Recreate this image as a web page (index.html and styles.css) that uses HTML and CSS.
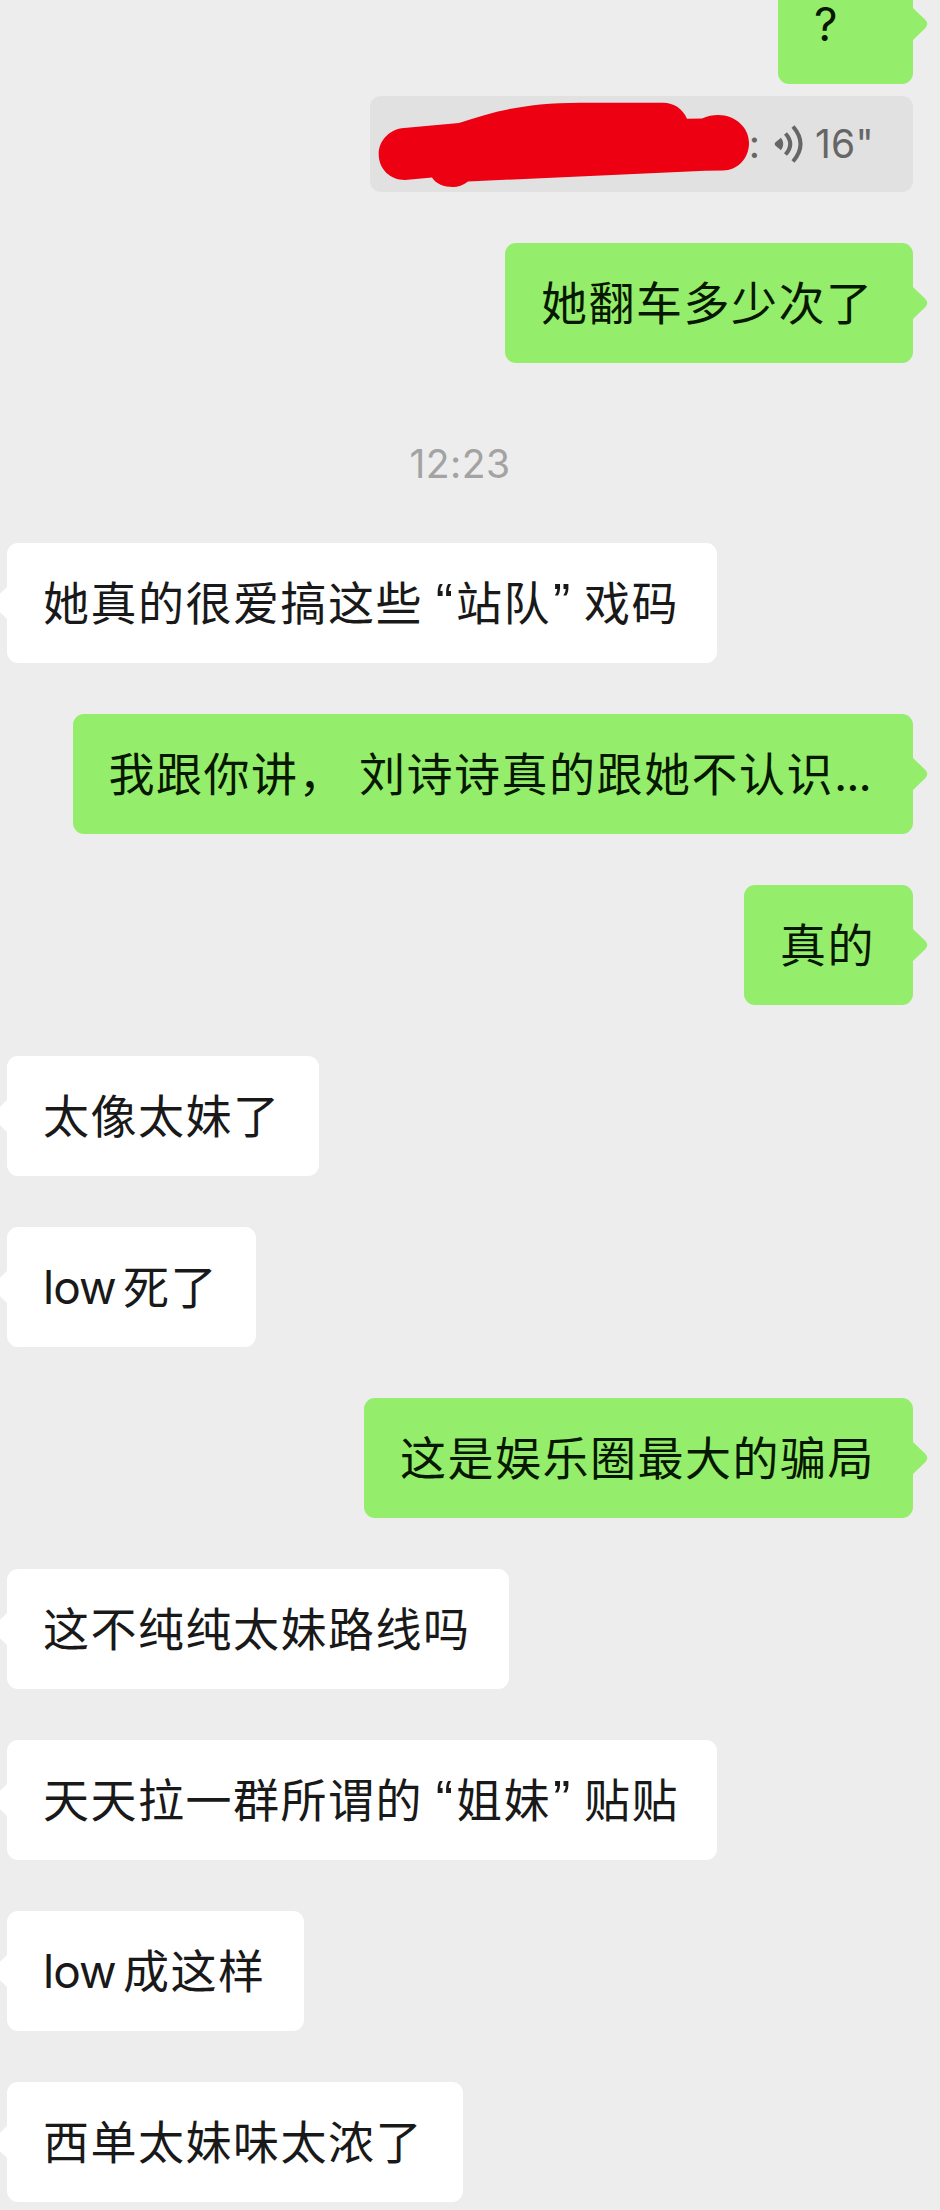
FILE: index.html
```html
<!DOCTYPE html>
<html lang="zh-CN">
<head>
<meta charset="utf-8">
<title>聊天</title>
<link rel="stylesheet" href="styles.css">
</head>
<body>
<svg class="defs" width="0" height="0">
  <symbol id="tail" viewBox="0 0 16 40"><path d="M0 0V1.500Q.5 4 3 6L13 15.500Q17.500 20 13 24.500L3 34Q.5 36 0 38.500V40Z"/></symbol>
</svg>
<main class="chat">
  <div class="row sent first"><div class="bubble short"><span class="latin">?</span><svg class="tail"><use href="#tail"/></svg></div></div>
  <div class="quote">
    <svg class="redaction" viewBox="0 0 543 96">
      <path d="M34 32 L89 27 C125 15 155 7 210 6.700 L293 6.700 C304 6.700 313 13 317 22.700 L332 22.500 C337 20 343 19 348 19 C366 19 379 32 379 47 C379 63 367 74.500 353 74.500 L335 74.700 L98 85.500 C93 89.500 88 91 83 91 C74 91 66 88 62 81.500 L35 84 C20 84 8.700 73 8.700 58 C8.700 44 20 33 34 32Z"/>
    </svg>
    <span class="colon">:</span>
    <svg class="voice" viewBox="0 0 30 40"><path class="wedge" d="M1.500 18.300L7 13.800Q11.500 20 7 26.200L1.500 21.700Q-.2 20 1.500 18.300Z"/><path d="M11.500 9.500Q21 20 11.500 30.500M19 2.500Q34 20 19 37.500"/></svg>
    <span class="seconds">16"</span>
  </div>
  <div class="row sent after-quote"><div class="bubble wide">她翻车多少次了<svg class="tail"><use href="#tail"/></svg></div></div>
  <time class="time">12:23</time>
  <div class="row"><div class="bubble"><svg class="tail"><use href="#tail"/></svg>她真的很爱搞这些<span class="mark open">“</span>站队<span class="mark">”</span>戏码</div></div>
  <div class="row sent"><div class="bubble clipped">我跟你讲，<span class="latin space"> </span>刘诗诗真的跟她不认识<span class="latin dots">...</span><svg class="tail"><use href="#tail"/></svg></div></div>
  <div class="row sent"><div class="bubble">真的<svg class="tail"><use href="#tail"/></svg></div></div>
  <div class="row"><div class="bubble"><svg class="tail"><use href="#tail"/></svg>太像太妹了</div></div>
  <div class="row"><div class="bubble"><svg class="tail"><use href="#tail"/></svg><span class="latin word">low</span>死了</div></div>
  <div class="row sent"><div class="bubble">这是娱乐圈最大的骗局<svg class="tail"><use href="#tail"/></svg></div></div>
  <div class="row"><div class="bubble"><svg class="tail"><use href="#tail"/></svg>这不纯纯太妹路线吗</div></div>
  <div class="row"><div class="bubble"><svg class="tail"><use href="#tail"/></svg>天天拉一群所谓的<span class="mark open">“</span>姐妹<span class="mark">”</span>贴贴</div></div>
  <div class="row"><div class="bubble"><svg class="tail"><use href="#tail"/></svg><span class="latin word">low</span>成这样</div></div>
  <div class="row"><div class="bubble wide"><svg class="tail"><use href="#tail"/></svg>西单太妹味太浓了</div></div>
</main>
</body>
</html>
```
FILE: styles.css
```css
* { box-sizing: border-box; }
html { background: #ededed; }
body { margin: 0; background: #ededed; }
.defs { display: block; }
.chat {
  width: 940px;
  height: 2210px;
  overflow: hidden;
  padding: 0 27px 0 7px;
  display: flex;
  flex-direction: column;
  font-family: Inter, "Noto Sans CJK SC", sans-serif;
}
.row { display: flex; flex: none; margin-bottom: 51px; }
.sent { justify-content: flex-end; }
.bubble {
  position: relative;
  height: 120px;
  padding: 0 38px 0 36px;
  border-radius: 11px;
  background: #fff;
  color: #191919;
  font: 46px/114px "Noto Sans CJK SC", sans-serif;
  letter-spacing: 1.5px;
  white-space: pre;
}
.sent .bubble { background: #95ee6b; color: #061900; }
.bubble.wide { padding-right: 39.5px; }
.bubble.clipped { padding-right: 46px; }
.first { margin-bottom: 12px; }
.after-quote { margin-bottom: 0; }
.bubble.short {
  width: 135px;
  height: 84px;
  line-height: 42px;
  border-radius: 0 0 11px 11px;
}
.tail {
  position: absolute;
  bottom: 40px;
  left: -15px;
  width: 16px;
  height: 40px;
  fill: #fff;
  transform: scaleX(-1);
}
.sent .tail { left: auto; right: -15px; fill: #95ee6b; transform: none; }
.latin { font-family: Inter, sans-serif; letter-spacing: 0; }
.space { display: inline-block; width: 13px; }
.dots { display: inline-block; width: 33px; letter-spacing: -1px; }
.word { display: inline-block; width: 80px; letter-spacing: -1px; }
.mark {
  display: inline-block;
  width: 33px;
  padding-left: 2px;
  font-family: "Liberation Sans", sans-serif;
  font-size: 52px;
  line-height: 60px;
  letter-spacing: 0;
}
.open { text-align: right; padding: 0 3px 0 0; }
.quote {
  position: relative;
  flex: none;
  align-self: flex-end;
  display: flex;
  align-items: center;
  justify-content: flex-end;
  width: 543px;
  height: 96px;
  margin-bottom: 51px;
  padding-right: 39px;
  border-radius: 11px;
  background: #e1e1e1;
  color: #666;
  font-size: 39px;
  line-height: 94px;
}
.redaction { position: absolute; left: 0; top: 0; width: 543px; height: 96px; fill: #ec0012; }
.colon { margin-right: 14px; }
.voice { width: 30px; height: 40px; margin-right: 11px; fill: none; stroke: #666; stroke-width: 4; }
.voice .wedge { fill: #666; stroke: none; }
.seconds { letter-spacing: .3px; }
.time {
  flex: none;
  height: 180px;
  text-align: center;
  color: #a3a3a3;
  font-size: 39px;
  line-height: 202px;
  letter-spacing: .4px;
}
```
